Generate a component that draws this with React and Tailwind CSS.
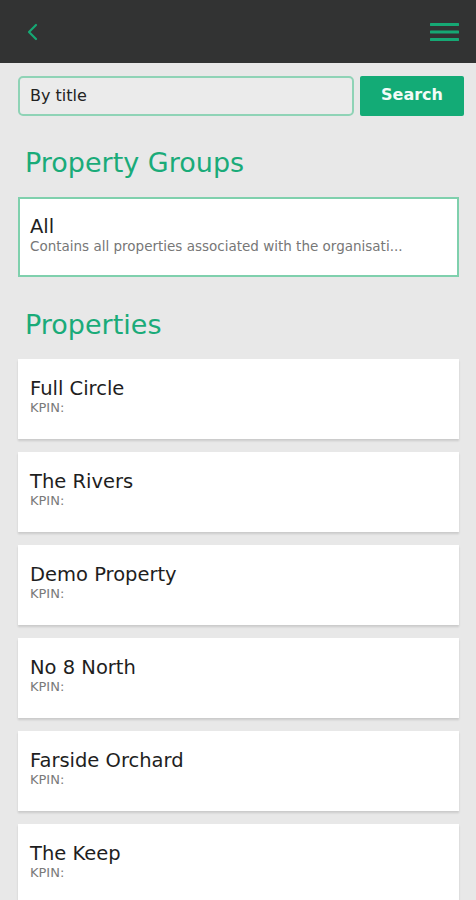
import React from "react";

const properties = [
  "Full Circle",
  "The Rivers",
  "Demo Property",
  "No 8 North",
  "Farside Orchard",
  "The Keep",
];

const PropertyCard = ({ name }) => (
  <div className="h-20 bg-white px-3 pt-[18px] shadow-[0_2px_2px_rgba(0,0,0,0.13)]">
    <div className="text-[19.5px] leading-[23px] text-[#1e1e1e]">{name}</div>
    <div className="text-[13px] leading-[15px] text-[#7a7a7a]">KPIN:</div>
  </div>
);

export default function App() {
  return (
    <div className="min-h-[900px] bg-[#e8e8e8] font-['DejaVu_Sans',sans-serif]">
      {/* Top bar */}
      <div className="flex h-[63px] items-center justify-between bg-[#323333] pl-[26px] pr-[17px]">
        <svg width="14" height="20" viewBox="0 0 14 20" fill="none">
          <path d="M10 3 L3 10 L10 17" stroke="#16a874" strokeWidth="2.2" strokeLinecap="round" strokeLinejoin="round" />
        </svg>
        <svg width="29" height="20" viewBox="0 0 29 20" fill="none">
          <path d="M1 2.5 H28 M1 10 H28 M1 17.5 H28" stroke="#16a874" strokeWidth="3" strokeLinecap="round" />
        </svg>
      </div>

      <div className="px-[18px]">
        {/* Search */}
        <div className="mt-[13px] -mr-[6px] flex h-10 gap-[6px]">
          <div className="flex flex-1 items-center rounded-[5px] border-2 border-[#8fd3b6] bg-[#ebebeb] px-[10px] text-[16px] text-[#222]">
            By title
          </div>
          <button className="w-[104px] rounded-[2px] bg-[#13ab76] pb-[3px] text-[16px] font-bold text-[#f4fbf8]">
            Search
          </button>
        </div>

        {/* Property groups */}
        <h2 className="mt-[31px] mb-[18px] pl-[7px] text-[27px] leading-[32px] text-[#1aab79]">
          Property Groups
        </h2>
        <div className="h-20 w-[441px] border-2 border-[#7fd0ad] bg-white px-[10px] pt-[16px]">
          <div className="text-[19.5px] leading-[23px] text-[#1e1e1e]">All</div>
          <div className="text-[13.5px] leading-[17px] text-[#777]">
            Contains all properties associated with the organisati...
          </div>
        </div>

        {/* Properties */}
        <h2 className="mt-[32px] mb-[18px] pl-[7px] text-[27px] leading-[32px] text-[#1aab79]">
          Properties
        </h2>
        <div className="flex w-[441px] flex-col gap-[13px]">
          {properties.map((p) => (
            <PropertyCard key={p} name={p} />
          ))}
        </div>
      </div>
    </div>
  );
}
